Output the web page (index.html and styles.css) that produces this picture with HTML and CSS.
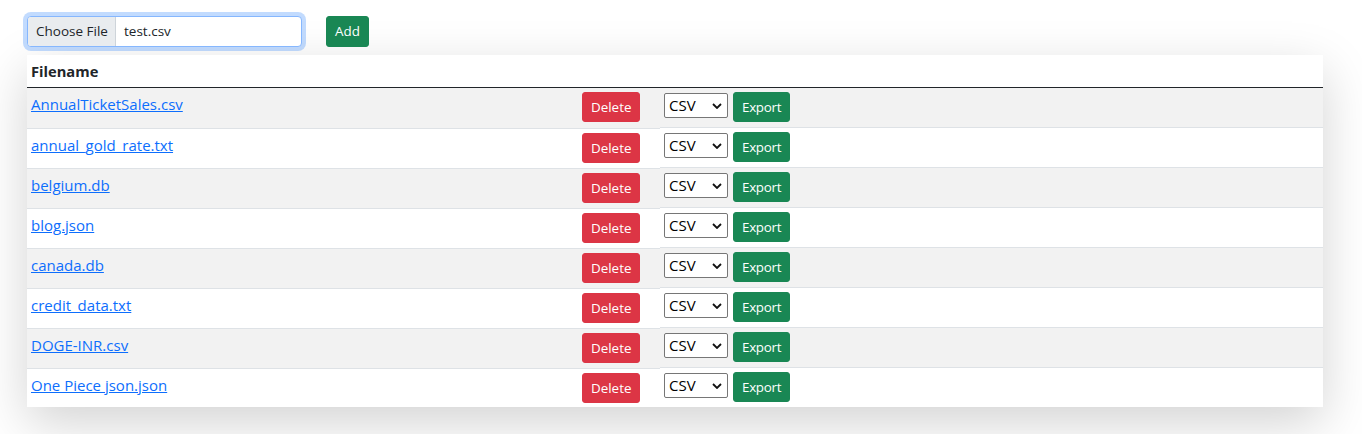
FILE: index.html
```html
<!DOCTYPE html>
<html lang="en">
<head>
<meta charset="utf-8">
<title>Files</title>
<link rel="stylesheet" href="styles.css">
</head>
<body>
<div class="page">
  <form class="toolbar">
    <div class="file-input">
      <span class="file-btn">Choose File</span>
      <span class="file-name">test.csv</span>
    </div>
    <button type="button" class="btn btn-success">Add</button>
  </form>

  <table class="files">
    <colgroup>
      <col class="c-name">
      <col class="c-del">
      <col class="c-exp">
    </colgroup>
    <thead>
      <tr><th>Filename</th><th></th><th></th></tr>
    </thead>
    <tbody>
      <tr>
        <td><a href="#">AnnualTicketSales.csv</a></td>
        <td><button type="button" class="btn btn-danger">Delete</button></td>
        <td class="exp"><span class="sel"><select><option>CSV</option></select><svg viewBox="0 0 10 6" width="10" height="6"><path d="M1 1l4 4 4-4" fill="none" stroke="#111" stroke-width="1.8"/></svg></span><button type="button" class="btn btn-success">Export</button></td>
      </tr>
      <tr>
        <td><a href="#">annual_gold_rate.txt</a></td>
        <td><button type="button" class="btn btn-danger">Delete</button></td>
        <td class="exp"><span class="sel"><select><option>CSV</option></select><svg viewBox="0 0 10 6" width="10" height="6"><path d="M1 1l4 4 4-4" fill="none" stroke="#111" stroke-width="1.8"/></svg></span><button type="button" class="btn btn-success">Export</button></td>
      </tr>
      <tr>
        <td><a href="#">belgium.db</a></td>
        <td><button type="button" class="btn btn-danger">Delete</button></td>
        <td class="exp"><span class="sel"><select><option>CSV</option></select><svg viewBox="0 0 10 6" width="10" height="6"><path d="M1 1l4 4 4-4" fill="none" stroke="#111" stroke-width="1.8"/></svg></span><button type="button" class="btn btn-success">Export</button></td>
      </tr>
      <tr>
        <td><a href="#">blog.json</a></td>
        <td><button type="button" class="btn btn-danger">Delete</button></td>
        <td class="exp"><span class="sel"><select><option>CSV</option></select><svg viewBox="0 0 10 6" width="10" height="6"><path d="M1 1l4 4 4-4" fill="none" stroke="#111" stroke-width="1.8"/></svg></span><button type="button" class="btn btn-success">Export</button></td>
      </tr>
      <tr>
        <td><a href="#">canada.db</a></td>
        <td><button type="button" class="btn btn-danger">Delete</button></td>
        <td class="exp"><span class="sel"><select><option>CSV</option></select><svg viewBox="0 0 10 6" width="10" height="6"><path d="M1 1l4 4 4-4" fill="none" stroke="#111" stroke-width="1.8"/></svg></span><button type="button" class="btn btn-success">Export</button></td>
      </tr>
      <tr>
        <td><a href="#">credit_data.txt</a></td>
        <td><button type="button" class="btn btn-danger">Delete</button></td>
        <td class="exp"><span class="sel"><select><option>CSV</option></select><svg viewBox="0 0 10 6" width="10" height="6"><path d="M1 1l4 4 4-4" fill="none" stroke="#111" stroke-width="1.8"/></svg></span><button type="button" class="btn btn-success">Export</button></td>
      </tr>
      <tr>
        <td><a href="#">DOGE-INR.csv</a></td>
        <td><button type="button" class="btn btn-danger">Delete</button></td>
        <td class="exp"><span class="sel"><select><option>CSV</option></select><svg viewBox="0 0 10 6" width="10" height="6"><path d="M1 1l4 4 4-4" fill="none" stroke="#111" stroke-width="1.8"/></svg></span><button type="button" class="btn btn-success">Export</button></td>
      </tr>
      <tr>
        <td><a href="#">One Piece json.json</a></td>
        <td><button type="button" class="btn btn-danger">Delete</button></td>
        <td class="exp"><span class="sel"><select><option>CSV</option></select><svg viewBox="0 0 10 6" width="10" height="6"><path d="M1 1l4 4 4-4" fill="none" stroke="#111" stroke-width="1.8"/></svg></span><button type="button" class="btn btn-success">Export</button></td>
      </tr>
    </tbody>
  </table>
</div>
</body>
</html>
```

FILE: styles.css
```css
* { box-sizing: border-box; }

html, body {
  margin: 0;
  background: #fff;
}

body {
  font-family: "Open Sans", "Noto Sans", "Liberation Sans", sans-serif;
  font-size: 15px;
  line-height: 24px;
  color: #212529;
}

.page {
  padding: 16px 0 26px 27px;
  min-height: 434px;
}

.toolbar {
  display: flex;
  align-items: flex-start;
  gap: 24px;
  margin: 0;
}

.file-input {
  display: flex;
  width: 275px;
  height: 31px;
  border: 1px solid #86b7fe;
  border-radius: 4px;
  box-shadow: 0 0 0 4px rgba(13, 110, 253, 0.25);
  font-size: 13.5px;
  line-height: 29px;
  overflow: hidden;
  background: #fff;
}

.file-btn {
  width: 88px;
  padding: 0 8px;
  background: #e9ecef;
  border-right: 1px solid #ced4da;
  color: #212529;
  white-space: nowrap;
}

.file-name {
  padding-left: 8px;
  color: #212529;
}

.btn {
  display: inline-block;
  height: 30px;
  padding: 0 8px;
  border: 1px solid transparent;
  border-radius: 3px;
  font-family: inherit;
  font-size: 13.4px;
  line-height: 28px;
  color: #fff;
  cursor: pointer;
  vertical-align: top;
}

.btn-success { background: #198754; border-color: #198754; }
.btn-danger  { background: #dc3545; border-color: #dc3545; }

.toolbar .btn { height: 31px; line-height: 29px; }
.exp .btn { letter-spacing: -0.3px; }

.files {
  width: 1296px;
  margin-top: 8px;
  border-collapse: collapse;
  box-shadow: 0 16px 48px rgba(0, 0, 0, 0.175);
  background: #fff;
}

.c-name { width: 551px; }
.c-del  { width: 82px; }

.files th {
  text-align: left;
  font-weight: 700;
  font-size: 14.7px;
  padding: 4px;
  height: 32px;
  border-bottom: 1px solid #212529;
}

.files td {
  padding: 4px;
  height: 40px;
  vertical-align: top;
  border-bottom: 1px solid #dee2e6;
}

.files tbody tr:nth-child(odd) td { background: #f2f2f2; }
.files tbody tr:last-child td { border-bottom: 0; height: 39px; }

.files a {
  color: #0d6efd;
  text-decoration: underline;
}

.exp {
  display: flex;
  align-items: flex-start;
  gap: 5px;
}

.sel {
  position: relative;
  display: inline-block;
  margin-top: 1px;
}

.sel select {
  appearance: none;
  -webkit-appearance: none;
  width: 64px;
  height: 25px;
  padding: 0 0 0 4px;
  border: 1px solid #767676;
  border-radius: 2px;
  background: #fff;
  font-family: inherit;
  font-size: 15px;
  line-height: 23px;
  color: #000;
}

.sel svg {
  position: absolute;
  right: 6px;
  top: 10px;
  pointer-events: none;
}
```
